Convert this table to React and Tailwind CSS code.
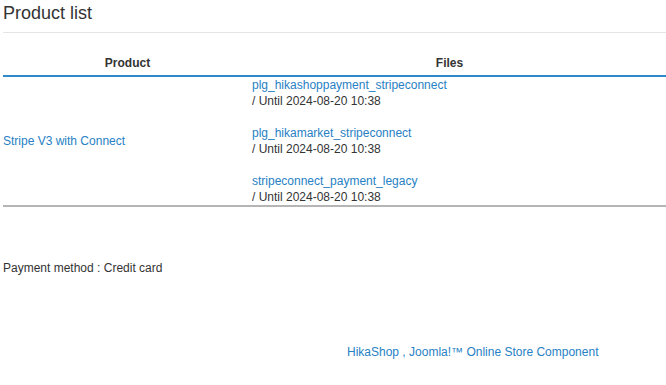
import React from 'react';

const files = [
    'plg_hikashoppayment_stripeconnect',
    'plg_hikamarket_stripeconnect',
    'stripeconnect_payment_legacy',
];

export default function App() {
    return (
        <div className="w-[666px] h-[385px] bg-white text-[#333] text-[12px] font-['Liberation_Sans',Arial,sans-serif] overflow-hidden">
            <div className="pl-[3px]">
                <h1 className="text-[18px] leading-[22px] pt-[2px] pb-[8px] border-b border-[#e5e5e5] text-[#333] font-normal">Product list</h1>

                <div className="mt-[17px]">
                    <div className="flex h-[27px] items-center border-b-2 border-[#2e8bc9] font-bold leading-[16px]">
                        <div className="w-[249px] text-center">Product</div>
                        <div className="flex-1 text-center pr-[19px]">Files</div>
                    </div>
                    <div className="flex border-b-2 border-[#b5b5b5] leading-[16px]">
                        <div className="w-[249px] flex items-center">
                            <a href="#" className="text-[#2781c4]">Stripe V3 with Connect</a>
                        </div>
                        <div className="flex-1">
                            {files.map((f, i) => (
                                <div key={f}>
                                    <a href="#" className="block text-[#2781c4]">{f}</a>
                                    <div>/ Until 2024-08-20 10:38</div>
                                    {i < files.length - 1 && <div className="h-[16px]"></div>}
                                </div>
                            ))}
                        </div>
                    </div>
                </div>

                <p className="mt-[53px] leading-[16px]">Payment method : Credit card</p>

                <div className="mt-[68px] pl-[344px] leading-[16px]">
                    <a href="#" className="text-[#2781c4]">HikaShop , Joomla!™ Online Store Component</a>
                </div>
            </div>
        </div>
    );
}
